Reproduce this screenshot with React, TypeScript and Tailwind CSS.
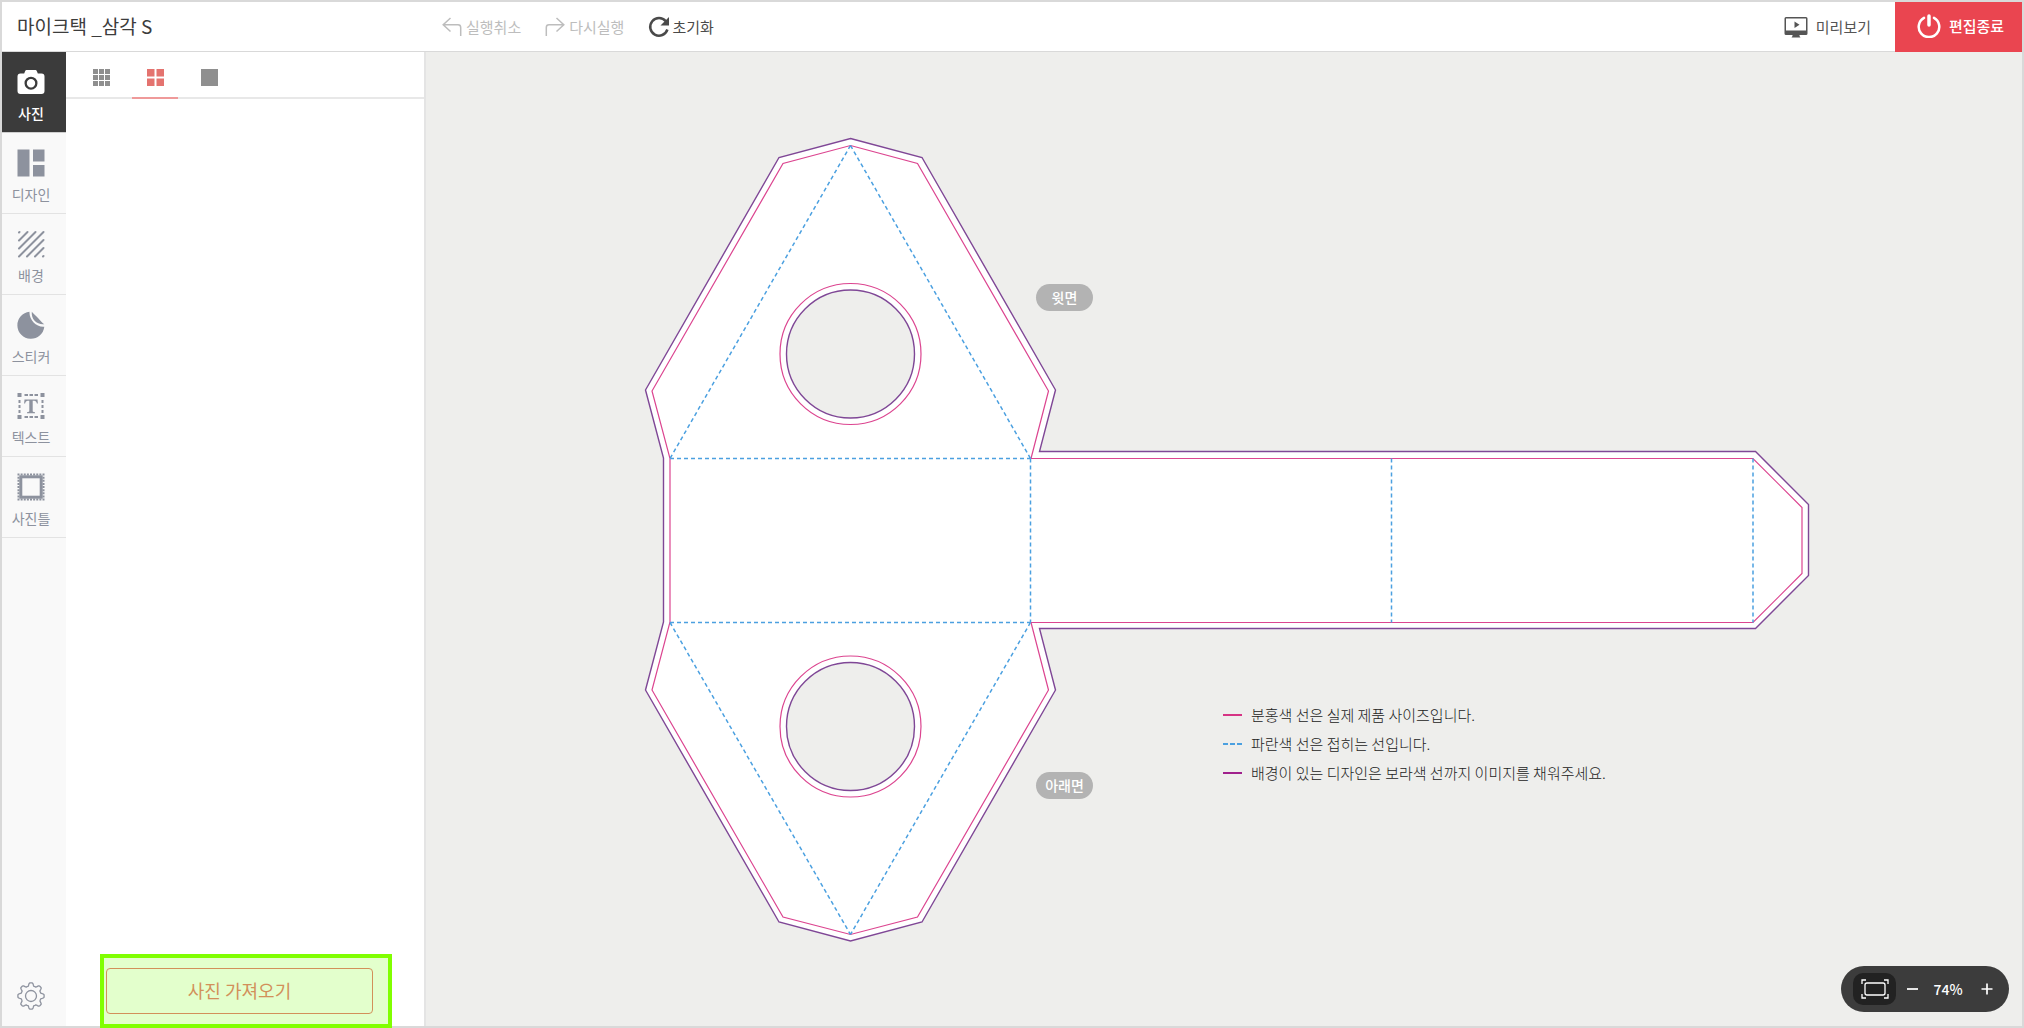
import type { ReactNode } from "react";

const outline =
  "850.5,138.5 922,157.5 1055.5,390 1039.5,451.5 1755.5,451.5 1808.5,504.5 1808.5,575.5 1755.5,628.5 1039.5,628.5 1055.5,690 922,922 850.5,941 779,922 645.5,690 663.5,622 663.5,458 645.5,390 779,157.5";
const cutLine =
  "850.5,145.5 917.5,163.5 1048.5,391 1031,458.5 1753,458.5 1802,507.5 1802,573.5 1753,622.5 1031,622.5 1048.5,690 917.5,917 850.5,934.5 783,917 652,690 670,622 670,458.5 652,391 783,163.5";
const foldLines = [
  "M850.5 145.5 670 458.5",
  "M850.5 145.5 1030.5 458.5",
  "M670 458.5H1030.5",
  "M1030.5 458.5V622.5",
  "M1391.5 458.5V622.5",
  "M1753 458.5V622.5",
  "M670 622.5H1030.5",
  "M670 622.5 850.5 934.5",
  "M1030.5 622.5 850.5 934.5",
];

function CameraIcon() {
  return (
    <svg width="28" height="28" viewBox="0 0 28 28" aria-hidden="true">
      <path
        fill="currentColor"
        fillRule="evenodd"
        d="M10 2h8c1 0 1.6.5 2 1.4L20.800 5.500H24.500A3 3 0 0 1 27.500 8.500V23a3 3 0 0 1-3 3H3.500a3 3 0 0 1-3-3V8.500a3 3 0 0 1 3-3H7.200L8 3.400C8.400 2.500 9 2 10 2ZM14 8.700a6.500 6.500 0 1 0 0 13 6.500 6.500 0 0 0 0-13Zm0 2.300a4.200 4.200 0 1 1 0 8.400 4.200 4.200 0 0 1 0-8.400Z"
      />
    </svg>
  );
}

function DesignIcon() {
  return (
    <svg width="28" height="28" viewBox="0 0 28 28" fill="currentColor" aria-hidden="true">
      <path d="M.5.500h12v27H.500zM16 .500h11.500v12H16zM16 16h11.500v11.500H16z" />
    </svg>
  );
}

function PatternIcon() {
  return (
    <svg width="28" height="28" viewBox="0 0 28 28" fill="none" stroke="currentColor" strokeWidth="2" strokeLinecap="round" aria-hidden="true">
      <path d="M2 2.500 2.500 2M2 10.500 10.500 2M2 18.500 18.500 2M2 26.500 26.500 2M10 26.500 26.500 10M18 26.500 26.500 18M26 26.500l.5-.5" />
    </svg>
  );
}

function StickerIcon() {
  return (
    <svg width="28" height="28" viewBox="0 0 28 28" fill="currentColor" aria-hidden="true">
      <path d="M12.500.800A13.500 13.500 0 1 0 27.300 15.700C19.500 16.500 12 9 12.500.800Z" />
      <path d="M14.800.800C14 8.500 20 14 27.300 13.300 25.500 12.200 23.500 9.500 21 7 18.700 4.700 16.500 3 14.800.800Z" />
    </svg>
  );
}

function TextIcon() {
  return (
    <svg width="28" height="28" viewBox="0 0 28 28" fill="currentColor" aria-hidden="true">
      <path d="M.5 1h4v4h-4zM23.500 1h4v4h-4zM.5 23h4v4h-4zM23.500 23h4v4h-4z" />
      <path d="M2.500 8v13M25.500 8v13" stroke="currentColor" strokeWidth="2" strokeDasharray="3 2" />
      <path d="M7.500 3H21M7.500 25H21" stroke="currentColor" strokeWidth="2" strokeDasharray="3.500 1.500" />
      <path d="M7.500 7.500h13l.4 4h-1c-.5-1.800-1.200-2.700-2.700-2.700h-1.500v10c0 1 .4 1.300 2.300 1.500v.9h-8v-.9c1.900-.2 2.300-.5 2.300-1.500v-10h-1.500c-1.500 0-2.200.9-2.700 2.700h-1z" />
    </svg>
  );
}

function FrameIcon() {
  return (
    <svg width="28" height="28" viewBox="0 0 28 28" fill="none" stroke="currentColor" aria-hidden="true">
      <rect x="3.800" y="3.800" width="20.400" height="20.400" strokeWidth="3" />
      <rect x="1.500" y="1.500" width="25" height="25" strokeWidth="2" strokeDasharray="2 1.125" strokeDashoffset="1" />
    </svg>
  );
}

function GearIcon() {
  const cogs: string[] = [];
  for (let i = 0; i < 128; i++) {
    const a = (i / 128) * Math.PI * 2;
    const wave = Math.max(-1, Math.min(1, Math.cos(a * 8) * 1.8));
    const r = 11.6 + wave * 1.5;
    cogs.push(`${(14 + r * Math.sin(a)).toFixed(2)},${(14 - r * Math.cos(a)).toFixed(2)}`);
  }
  return (
    <svg width="28" height="28" viewBox="0 0 28 28" fill="none" stroke="currentColor" strokeWidth="1.300" strokeLinejoin="round" aria-hidden="true">
      <polygon points={cogs.join(" ")} />
      <circle cx="14" cy="14" r="5.500" />
    </svg>
  );
}

function UndoIcon() {
  return (
    <svg width="20" height="20" viewBox="0 0 20 20" fill="none" stroke="currentColor" strokeWidth="1.500" aria-hidden="true">
      <path d="M8.500 1 1.200 7.800 8.500 14.500M1.200 7.800H16c1.800 0 2.700.9 2.700 2.700V19" />
    </svg>
  );
}

function RedoIcon() {
  return (
    <svg width="20" height="20" viewBox="0 0 20 20" fill="none" stroke="currentColor" strokeWidth="1.500" aria-hidden="true">
      <path d="M11.500 1 18.800 7.800 11.500 14.500M18.800 7.800H4c-1.800 0-2.700.9-2.700 2.700V19" />
    </svg>
  );
}

function ResetIcon() {
  return (
    <svg width="22" height="22" viewBox="0 0 22 22" aria-hidden="true">
      <path d="M17.800 5.200A8.800 8.800 0 1 0 19.400 13.500" fill="none" stroke="currentColor" strokeWidth="2.500" />
      <path d="M21 1v8.500h-8.500z" fill="currentColor" />
    </svg>
  );
}

function PreviewIcon() {
  return (
    <svg width="24" height="22" viewBox="0 0 24 22" aria-hidden="true">
      <path fill="currentColor" fillRule="evenodd" d="M2 1h20a1.500 1.500 0 0 1 1.500 1.500v15A1.500 1.500 0 0 1 22 19h-6.500v1l1 1.500h-9l1-1.500v-1H2a1.500 1.500 0 0 1-1.500-1.500v-15A1.500 1.500 0 0 1 2 1Zm0 1.500v12h20v-12z" />
      <path fill="currentColor" d="m10.500 5.500 5 3.200-5 3.200z" />
    </svg>
  );
}

function PowerIcon() {
  return (
    <svg width="24" height="24" viewBox="0 0 24 24" fill="none" stroke="currentColor" strokeLinecap="round" aria-hidden="true">
      <path d="M7 3.800a10.300 10.300 0 1 0 10 0" strokeWidth="2.500" />
      <path d="M12 2v9" strokeWidth="3.500" />
    </svg>
  );
}

function FitIcon() {
  return (
    <svg width="28" height="20" viewBox="0 0 28 20" fill="none" stroke="currentColor" strokeWidth="1.300" aria-hidden="true">
      <path d="M1 5V1h4M23 1h4v4M27 15v4h-4M5 19H1v-4" />
      <rect x="4" y="4" width="20" height="12" rx="2" />
    </svg>
  );
}

type Tool = { label: string; icon: ReactNode; active?: boolean };

const tools: Tool[] = [
  { label: "사진", icon: <CameraIcon />, active: true },
  { label: "디자인", icon: <DesignIcon /> },
  { label: "배경", icon: <PatternIcon /> },
  { label: "스티커", icon: <StickerIcon /> },
  { label: "텍스트", icon: <TextIcon /> },
  { label: "사진틀", icon: <FrameIcon /> },
];

function Header() {
  return (
    <header className="flex h-[50px] shrink-0 items-stretch border-b border-[#d9d9d9] bg-white text-[15px] leading-5 text-[#4a4a4a]">
      <h1 className="flex w-[424px] shrink-0 items-center pb-[2px] pl-[15px] text-[19px] text-[#3c3c3c]">마이크택 _삼각 S</h1>
      <nav className="flex items-center gap-6 pl-4">
        <button type="button" disabled className="flex items-center gap-1 text-[#bdbdbd]">
          <UndoIcon />
          실행취소
        </button>
        <button type="button" disabled className="flex items-center gap-1 text-[#bdbdbd]">
          <RedoIcon />
          다시실행
        </button>
        <button type="button" className="flex items-center gap-[2px]">
          <ResetIcon />
          초기화
        </button>
      </nav>
      <button type="button" className="ml-auto mr-6 flex items-center gap-2 text-[#555]">
        <PreviewIcon />
        미리보기
      </button>
      <button type="button" className="-mb-px flex w-[127px] items-center justify-center gap-2 bg-[#ea4550] pb-[2px] pl-1 font-medium text-white">
        <PowerIcon />
        편집종료
      </button>
    </header>
  );
}

function Sidebar() {
  return (
    <aside className="flex w-16 shrink-0 flex-col bg-[#f9f9f9] text-[#8d929e]">
      {tools.map((tool) => (
        <button
          key={tool.label}
          type="button"
          className={
            tool.active
              ? "flex flex-col items-center gap-[7px] border-b border-[#cfcfcf] bg-[#3b3b3b] pb-[9px] pr-[6px] pt-4 text-sm font-medium text-white"
              : "flex flex-col items-center gap-[7px] border-b border-[#e3e3e3] pb-[9px] pr-[6px] pt-4 text-sm"
          }
        >
          {tool.icon}
          {tool.label}
        </button>
      ))}
      <button type="button" aria-label="설정" className="mb-4 mt-auto flex justify-center pr-[6px]">
        <GearIcon />
      </button>
    </aside>
  );
}

function Panel() {
  return (
    <section className="flex w-[360px] shrink-0 flex-col border-r-2 border-[#e4e4e4] bg-white">
      <div className="flex h-[47px] gap-2 border-b-2 border-[#e8e8e8] pl-3 text-[#8f8f8f]">
        <button type="button" aria-label="작게 보기" className="flex w-[46px] items-center justify-center pt-[6px]">
          <svg width="17" height="17" viewBox="0 0 17 17" fill="currentColor" aria-hidden="true">
            <path d="M0 0h5v5H0zM6 0h5v5H6zM12 0h5v5h-5zM0 6h5v5H0zM6 6h5v5H6zM12 6h5v5h-5zM0 12h5v5H0zM6 12h5v5H6zM12 12h5v5h-5z" />
          </svg>
        </button>
        <button type="button" aria-label="중간 보기" className="-mb-[2px] flex w-[46px] items-center justify-center border-b-2 border-[#ef9a9a] pt-[6px] text-[#e4736f]">
          <svg width="17" height="17" viewBox="0 0 17 17" fill="currentColor" aria-hidden="true">
            <path d="M0 0h7.500v7.500H0zM9.500 0H17v7.500H9.500zM0 9.500h7.500V17H0zM9.500 9.500H17V17H9.500z" />
          </svg>
        </button>
        <button type="button" aria-label="크게 보기" className="flex w-[46px] items-center justify-center pt-[6px]">
          <span className="size-[17px] bg-current" />
        </button>
      </div>
      <div className="z-10 -mb-[2px] ml-[34px] mr-8 mt-auto border-4 border-[#80ff00] bg-[#e3ffcc] py-[10px] pl-[2px] pr-[15px]">
        <button type="button" className="h-[46px] w-full rounded border border-[#d2905a] pb-[2px] text-lg text-[#d2905a]">
          사진 가져오기
        </button>
      </div>
    </section>
  );
}

function Template() {
  return (
    <svg viewBox="636 135 1176 808" className="h-auto w-full" fill="none" role="img" aria-label="마이크택 도안">
      <polygon points={outline} fill="#ffffff" stroke="#7f4796" strokeWidth="1.400" />
      <polygon points={cutLine} stroke="#dc4590" strokeWidth="1.200" />
      {[354, 726.5].map((cy) => (
        <g key={cy}>
          <circle cx="850.500" cy={cy} r="70.500" stroke="#dc4590" strokeWidth="1.200" />
          <circle cx="850.500" cy={cy} r="64" fill="#eeeeec" stroke="#7f4796" strokeWidth="1.400" />
        </g>
      ))}
      <path d={foldLines.join("")} stroke="#4ba0e0" strokeWidth="1.500" strokeDasharray="4 3" />
    </svg>
  );
}

function Legend() {
  return (
    <ul className="absolute left-[587px] top-[568px] flex flex-col gap-[5px] whitespace-nowrap text-[15px] font-light leading-6 text-[#222]">
      <li className="flex items-center gap-[9px]">
        <span className="w-[19px] border-t-2 border-[#d63384]" />
        분홍색 선은 실제 제품 사이즈입니다.
      </li>
      <li className="flex items-center gap-[9px]">
        <span className="flex w-[19px] justify-between">
          <span className="h-[2px] w-[5px] bg-[#4ba0e0]" />
          <span className="h-[2px] w-[5px] bg-[#4ba0e0]" />
          <span className="h-[2px] w-[5px] bg-[#4ba0e0]" />
        </span>
        파란색 선은 접히는 선입니다.
      </li>
      <li className="flex items-center gap-[9px]">
        <span className="w-[19px] border-t-2 border-[#a0208c]" />
        배경이 있는 디자인은 보라색 선까지 이미지를 채워주세요.
      </li>
    </ul>
  );
}

function ZoomBar() {
  return (
    <div className="absolute bottom-[14px] right-[13px] flex h-[46px] items-center rounded-full bg-[#3c3c3c] px-3 text-white">
      <button type="button" aria-label="화면 맞춤" className="flex h-8 w-[43px] items-center justify-center rounded-[10px] bg-[#222]">
        <FitIcon />
      </button>
      <button type="button" aria-label="축소" className="flex h-8 w-8 items-center justify-center">
        <span className="h-[2px] w-[11px] bg-[#e6e6e6]" />
      </button>
      <span className="w-10 text-center text-sm font-medium">74%</span>
      <button type="button" aria-label="확대" className="flex h-8 w-[29px] items-center justify-center pl-2">
        <svg width="12" height="12" viewBox="0 0 12 12" stroke="currentColor" strokeWidth="1.700" aria-hidden="true">
          <path d="M6 .5v11M.5 6h11" />
        </svg>
      </button>
    </div>
  );
}

export default function App() {
  return (
    <div className="flex min-h-screen flex-col border-2 border-[#d9d9d9] bg-white font-['Noto_Sans_CJK_KR',sans-serif]">
      <Header />
      <div className="flex flex-1">
        <Sidebar />
        <Panel />
        <main className="relative flex flex-1 items-center justify-center bg-[#eeeeec]">
          <div className="relative w-[1176px]">
            <Template />
            <span className="absolute left-[400px] top-[149px] flex h-[27px] w-[57px] items-center justify-center rounded-full bg-[#b3b3b3] pb-px text-sm font-medium text-white">윗면</span>
            <span className="absolute left-[400px] top-[637px] flex h-[27px] w-[57px] items-center justify-center rounded-full bg-[#b3b3b3] pb-px text-sm font-medium text-white">아래면</span>
            <Legend />
          </div>
          <ZoomBar />
        </main>
      </div>
    </div>
  );
}
